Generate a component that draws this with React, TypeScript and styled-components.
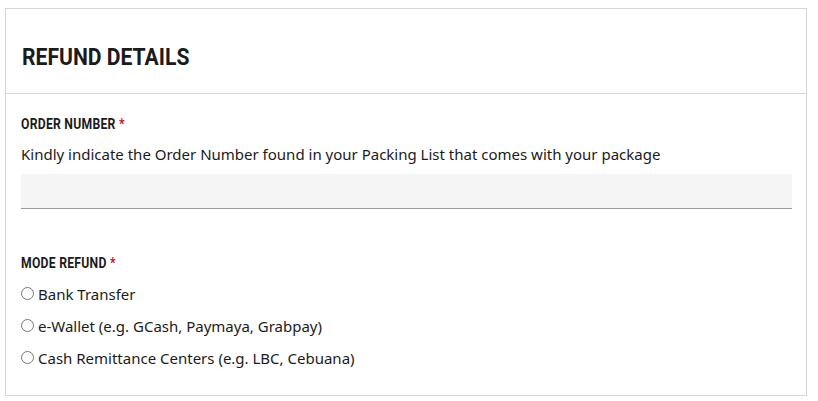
import React from "react";
import styled, { createGlobalStyle } from "styled-components";

const GlobalStyle = createGlobalStyle`
    body {
        margin: 0;
        background: #fff;
        font-family: "Noto Sans", "Open Sans", sans-serif;
        color: #1b1b1b;
    }
`;

const Page = styled.div`
    padding: 8px 11px 7px 5px;
`;

const Card = styled.section`
    border: 1px solid #d6d6d6;
    background: #fff;
`;

const CardHeader = styled.header`
    padding: 34px 16px 0px 16px;
    height: 85px;
    box-sizing: border-box;
    border-bottom: 1px solid #d6d6d6;
`;

// condensed heading face: squeeze Roboto bold
const Title = styled.h2`
    display: inline-block;
    margin: 0;
    font-family: Roboto, "Liberation Sans", sans-serif;
    font-weight: 700;
    font-size: 24px;
    line-height: 28px;
    color: #1b1b1b;
    transform: scaleX(0.88);
    transform-origin: left center;
`;

const CardBody = styled.div`
    padding: 23px 15px 27px 15px;
    display: flex;
    flex-direction: column;
    gap: 47px;
`;

const Field = styled.div`
    display: flex;
    flex-direction: column;
    align-items: flex-start;
`;

const Label = styled.label`
    display: inline-block;
    font-family: Roboto, "Liberation Sans", sans-serif;
    font-weight: 700;
    font-size: 14px;
    line-height: 15px;
    letter-spacing: 0.3px;
    color: #1b1b1b;
    transform: scaleX(0.87);
    transform-origin: left center;
    span {
        color: #c8102e;
    }
`;

const Hint = styled.p`
    margin: 12px 0 10px 0;
    font-size: 15px;
    color: #1b1b1b;
`;

const TextInput = styled.input`
    align-self: stretch;
    height: 35px;
    box-sizing: border-box;
    border: none;
    border-bottom: 1px solid #9a9a9a;
    background: #f5f5f5;
    margin-right: -1px;
    outline: none;
`;

const Options = styled.div`
    display: flex;
    flex-direction: column;
    gap: 11px;
    margin-top: 12px;
`;

const Option = styled.label`
    display: flex;
    align-items: center;
    gap: 4px;
    font-size: 15px;
    height: 21px;
    input {
        margin: 0;
        width: 13px;
        height: 13px;
    }
`;

const modes = [
    "Bank Transfer",
    "e-Wallet (e.g. GCash, Paymaya, Grabpay)",
    "Cash Remittance Centers (e.g. LBC, Cebuana)",
];

export default function App() {
    return (
        <>
            <GlobalStyle />
            <Page>
                <Card>
                    <CardHeader>
                        <Title>REFUND DETAILS</Title>
                    </CardHeader>
                    <CardBody>
                        <Field>
                            <Label>ORDER NUMBER <span>*</span></Label>
                            <Hint>Kindly indicate the Order Number found in your Packing List that comes with your package</Hint>
                            <TextInput type="text" />
                        </Field>
                        <Field>
                            <Label>MODE REFUND <span>*</span></Label>
                            <Options>
                                {modes.map((m) => (
                                    <Option key={m}>
                                        <input type="radio" name="mode" />
                                        {m}
                                    </Option>
                                ))}
                            </Options>
                        </Field>
                    </CardBody>
                </Card>
            </Page>
        </>
    );
}
